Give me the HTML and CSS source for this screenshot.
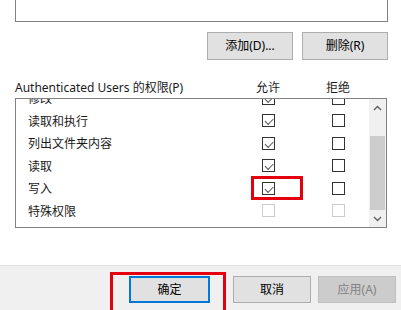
FILE: index.html
```html
<!DOCTYPE html>
<html lang="zh-CN">
<head>
<meta charset="utf-8">
<link rel="stylesheet" href="styles.css">
</head>
<body>
<div class="page">
  <div class="main">
    <div class="userbox"></div>
    <div class="actions">
      <button class="btn">添加(D)...</button>
      <button class="btn">删除(R)</button>
    </div>
    <div class="permhead">
      <span class="permlabel">Authenticated Users 的权限(P)</span>
      <span class="colhead allow">允许</span>
      <span class="colhead deny">拒绝</span>
    </div>
    <div class="list">
      <div class="rows">
        <div class="rowsinner">
          <div class="row"><span class="name">修改</span><span class="cell allow"><span class="cb checked"></span></span><span class="cell deny"><span class="cb"></span></span></div>
          <div class="row"><span class="name">读取和执行</span><span class="cell allow"><span class="cb checked"></span></span><span class="cell deny"><span class="cb"></span></span></div>
          <div class="row"><span class="name">列出文件夹内容</span><span class="cell allow"><span class="cb checked"></span></span><span class="cell deny"><span class="cb"></span></span></div>
          <div class="row"><span class="name">读取</span><span class="cell allow"><span class="cb checked"></span></span><span class="cell deny"><span class="cb"></span></span></div>
          <div class="row"><span class="name">写入</span><span class="cell allow"><span class="cb checked"></span><span class="redbox small"></span></span><span class="cell deny"><span class="cb"></span></span></div>
          <div class="row"><span class="name">特殊权限</span><span class="cell allow"><span class="cb disabled"></span></span><span class="cell deny"><span class="cb disabled"></span></span></div>
        </div>
      </div>
      <div class="scrollbar">
        <div class="sbtn"><svg width="9" height="6" viewBox="0 0 9 6"><polyline points="1,5 4.5,1.5 8,5" fill="none" stroke="#606060" stroke-width="1.4"/></svg></div>
        <div class="track"><div class="thumb"></div></div>
        <div class="sbtn"><svg width="9" height="6" viewBox="0 0 9 6"><polyline points="1,1 4.5,4.5 8,1" fill="none" stroke="#606060" stroke-width="1.4"/></svg></div>
      </div>
    </div>
  </div>
  <div class="footer">
    <div class="okwrap">
      <button class="btn fbtn default">确定</button>
      <span class="redbox big"></span>
    </div>
    <button class="btn fbtn">取消</button>
    <button class="btn fbtn disabledbtn">应用(A)</button>
  </div>
</div>
</body>
</html>
```

FILE: styles.css
```css
* { box-sizing: border-box; }
html, body { margin: 0; padding: 0; }
body {
  width: 401px;
  height: 310px;
  overflow: hidden;
  background: #ffffff;
  font-family: "Noto Sans", "Noto Sans CJK SC", sans-serif;
  font-size: 12px;
  color: #000;
}
.page { display: flex; flex-direction: column; height: 310px; }
.main { flex: 1; padding: 0 13px 0 15px; display: flex; flex-direction: column; }
.userbox {
  height: 32px;
  margin-top: -10px;
  border: 1px solid #828282;
  background: #fff;
}
.actions {
  display: flex;
  justify-content: flex-end;
  gap: 9px;
  margin-top: 10px;
}
.btn {
  font-family: "Noto Sans", "Noto Sans CJK SC", sans-serif;
  font-size: 12px;
  color: #000;
  background: #e1e1e1;
  border: 1px solid #adadad;
  border-radius: 0;
  padding: 0;
  margin: 0;
  line-height: 1;
}
.actions .btn { width: 86px; height: 28px; }
.permhead {
  display: flex;
  align-items: center;
  height: 16px;
  margin-top: 19px;
  margin-right: 1px;
}
.permlabel { flex: 1; color: #1a1a1a; }
.colhead { text-align: center; color: #1a1a1a; }
.colhead.allow { width: 78px; }
.colhead.deny { width: 62px; margin-right: 18px; }
.list {
  margin-top: 3px;
  height: 130px;
  margin-right: 1px;
  border: 1px solid #828282;
  display: flex;
}
.rows { flex: 1; overflow: hidden; position: relative; }
.rowsinner { margin-top: -12px; }
.row { display: flex; align-items: center; height: 22.5px; }
.name { flex: 1; padding-left: 12px; color: #1a1a1a; }
.cell { display: flex; justify-content: center; position: relative; }
.cell.allow { width: 78px; }
.cell.deny { width: 62px; }
.cb {
  width: 13px; height: 13px;
  border: 1px solid #333333;
  background: #fff;
  position: relative;
}
.cb.checked::after {
  content: "";
  position: absolute;
  left: 2px; top: 1px;
  width: 7px; height: 3.5px;
  border-left: 1.5px solid #5a5a5a;
  border-bottom: 1.5px solid #5a5a5a;
  transform: translate(0px, 2px) rotate(-45deg);
}
.cb.disabled { border-color: #cccccc; }
.scrollbar {
  width: 17px;
  background: #f0f0f0;
  display: flex;
  flex-direction: column;
}
.sbtn { height: 17px; display: flex; align-items: center; justify-content: center; }
.track { flex: 1; display: flex; flex-direction: column; justify-content: flex-end; }
.thumb { height: 74px; margin: 0 1px; background: #cdcdcd; }
.footer {
  height: 45px;
  background: #f0f0f0;
  border-top: 1px solid #dfdfdf;
  display: flex;
  align-items: flex-start;
  padding: 10px 0 0 129px;
}
.fbtn { width: 78px; height: 27px; }
.okwrap { position: relative; margin-right: 23px; }
.default { width: 81px; border: 2px solid #0078d7; display: block; }
.disabledbtn { background: #cccccc; border-color: #bfbfbf; color: #838383; margin-left: 7px; }
.redbox { position: absolute; border: 3px solid #e5000f; pointer-events: none; }
.redbox.small { left: 22px; top: -6px; width: 52px; height: 24px; }
.redbox.big { left: -19px; top: -4px; width: 116px; height: 44px; }
```
